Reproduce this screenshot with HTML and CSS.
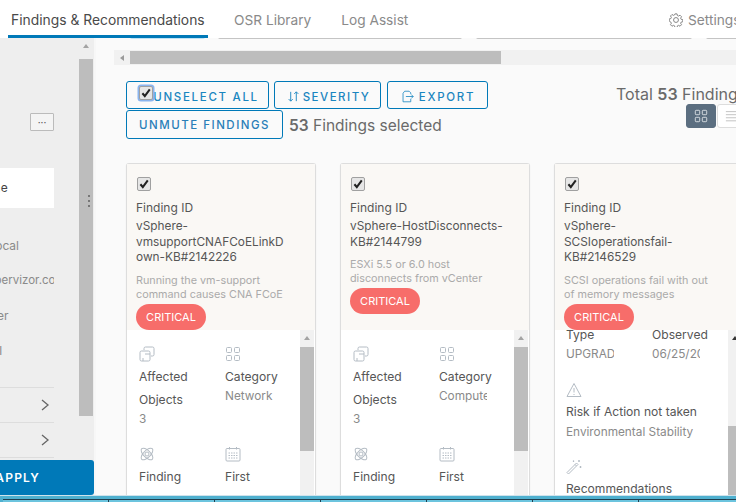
FILE: index.html
```html
<!DOCTYPE html>
<html lang="en">
<head>
<meta charset="utf-8">
<title>Findings &amp; Recommendations</title>
<link rel="stylesheet" href="styles.css">
</head>
<body>
<svg class="defs" width="0" height="0" aria-hidden="true">
  <symbol id="i-clone" viewBox="0 0 16 16"><path d="M5 4V2.500A1.500 1.500 0 0 1 6.500 1h7A1.500 1.500 0 0 1 15 2.500v6a1.500 1.500 0 0 1-1.500 1.500H12M2.500 5h7A1.500 1.500 0 0 1 11 6.500v7A1.500 1.500 0 0 1 9.500 15h-7A1.500 1.500 0 0 1 1 13.500v-7A1.500 1.500 0 0 1 2.500 5ZM6 8h5M4 15v-3"/></symbol>
  <symbol id="i-grid" viewBox="0 0 16 16"><rect x="1.500" y="1.500" width="5" height="5" rx="1"/><rect x="9.500" y="1.500" width="5" height="5" rx="1"/><rect x="1.500" y="9.500" width="5" height="5" rx="1"/><rect x="9.500" y="9.500" width="5" height="5" rx="1"/></symbol>
  <symbol id="i-atom" viewBox="0 0 16 16"><ellipse cx="8" cy="8" rx="7.500" ry="3.500" transform="rotate(45 8 8)"/><ellipse cx="8" cy="8" rx="7.500" ry="3.500" transform="rotate(-45 8 8)"/><circle cx="8" cy="8" r="2"/></symbol>
  <symbol id="i-cal" viewBox="0 0 16 16"><rect x="1" y="2.500" width="14" height="12.500" rx="1"/><path d="M4.500 1v3M11.500 1v3M3.500 7h9M3.500 9.500h9M3.500 12h9" stroke-dasharray="1.500 1"/></symbol>
  <symbol id="i-warn" viewBox="0 0 16 16"><path d="M8 1.500 15 14.500H1ZM8 6v4.500M8 12v1"/></symbol>
  <symbol id="i-wand" viewBox="0 0 16 16"><path d="M1 13.500 10.500 4l1.500 1.500L2.500 15ZM9 5.500 10.500 7M13 1v2M14 2h-2M14.500 7v2M15.500 8h-2M7.500 1.500v1.500M8.200 2.200H6.800"/></symbol>
  <symbol id="i-chev" viewBox="0 0 10 14"><path d="M2 2l6 5-6 5"/></symbol>
  <symbol id="i-tick" viewBox="0 0 14 14"><path d="M2.800 7.300 5.600 10.500 11.400 2.800"/></symbol>
</svg>
<div class="page">
  <nav class="tabs">
    <a class="tab active">Findings &amp; Recommendations</a>
    <a class="tab">OSR Library</a>
    <a class="tab">Log Assist</a>
    <span class="settings">
      <svg class="gear" viewBox="0 0 16 16"><path d="M6.800 1h2.400l.4 1.900 1.300.6 1.700-1 1.700 1.700-1 1.700.6 1.300 1.900.4v2.400l-1.900.4-.6 1.300 1 1.700-1.700 1.700-1.700-1-1.300.6-.4 1.900H6.800l-.4-1.900-1.300-.6-1.700 1-1.700-1.700 1-1.700-.6-1.300L.2 9.200V6.800l1.900-.4.6-1.300-1-1.700 1.700-1.700 1.700 1 1.300-.6Z"/><circle cx="8" cy="8" r="2.800"/></svg>
      Settings
    </span>
  </nav>
  <div class="main">
    <aside class="side">
      <div class="side-col">
        <button class="more">···</button>
        <div class="picked">All Time</div>
        <ul class="hosts">
          <li>vc01.local</li>
          <li>esx.hypervizor.com</li>
          <li>Cluster</li>
          <li>All</li>
        </ul>
        <div class="acc"><svg class="chev"><use href="#i-chev"/></svg></div>
        <div class="acc"><svg class="chev"><use href="#i-chev"/></svg></div>
      </div>
      <div class="vbar"><i class="up"></i><b class="thumb"></b></div>
      <div class="grip"><i></i><i></i><i></i></div>
      <button class="apply">APPLY</button>
    </aside>
    <section class="content">
      <div class="pills"><i class="pill blue"></i><i class="pill p1"></i><i class="pill p2"></i><i class="pill p3"></i></div>
      <div class="hbar"><i class="left"></i><b></b></div>
      <div class="toolbar">
        <div class="actions">
          <button class="btn b-unselect">UNSELECT ALL</button>
          <button class="btn b-sev"><svg class="ico" viewBox="0 0 14 14"><path d="M4 2v10M1.800 9.800 4 12l2.200-2.200M10 12V2M7.800 4.200 10 2l2.200 2.200"/></svg>SEVERITY</button>
          <button class="btn b-exp"><svg class="ico" viewBox="0 0 16 16"><path d="M12 5V3.500L10 1.500H4.500L2.500 4v10.500h9.500V11M6 8h9M12.500 5.500 15 8l-2.500 2.500"/></svg>EXPORT</button>
          <button class="btn b-unmute">UNMUTE FINDINGS</button>
          <span class="selected"><strong>53</strong> Findings selected</span>
          <span class="chk chk-focus" role="checkbox" aria-checked="true"><svg><use href="#i-tick"/></svg></span>
        </div>
        <div class="totals">
          <div class="total">Total <strong>53</strong> Findings</div>
          <div class="views">
            <span class="view on"><svg><use href="#i-grid"/></svg></span>
            <span class="view"><svg viewBox="0 0 16 16"><path d="M1 3h14M1 6.500h14M1 10h14M1 13.500h14"/></svg></span>
          </div>
        </div>
      </div>
      <div class="cards">
        <article class="card">
          <header class="head">
            <span class="chk" role="checkbox" aria-checked="true"><svg><use href="#i-tick"/></svg></span>
            <h4>Finding ID</h4>
            <p class="name">vSphere-<br>vmsupportCNAFCoELinkD<br>own-KB#2142226</p>
            <p class="desc">Running the vm-support<br>command causes CNA FCoE</p>
            <span class="crit">CRITICAL</span>
          </header>
          <div class="body">
            <div class="grid">
              <div class="cell"><svg class="ic"><use href="#i-clone"/></svg><h5>Affected Objects</h5><p>3</p></div>
              <div class="cell"><svg class="ic"><use href="#i-grid"/></svg><h5>Category</h5><p class="cut">Network</p></div>
              <div class="cell"><svg class="ic"><use href="#i-atom"/></svg><h5>Finding</h5></div>
              <div class="cell"><svg class="ic"><use href="#i-cal"/></svg><h5>First</h5></div>
            </div>
            <div class="vbar inner"><i class="up"></i><b class="thumb"></b></div>
          </div>
        </article>
        <article class="card">
          <header class="head">
            <span class="chk" role="checkbox" aria-checked="true"><svg><use href="#i-tick"/></svg></span>
            <h4>Finding ID</h4>
            <p class="name">vSphere-HostDisconnects-<br>KB#2144799</p>
            <p class="desc">ESXi 5.5 or 6.0 host<br>disconnects from vCenter</p>
            <span class="crit">CRITICAL</span>
          </header>
          <div class="body">
            <div class="grid">
              <div class="cell"><svg class="ic"><use href="#i-clone"/></svg><h5>Affected Objects</h5><p>3</p></div>
              <div class="cell"><svg class="ic"><use href="#i-grid"/></svg><h5>Category</h5><p class="cut">Compute</p></div>
              <div class="cell"><svg class="ic"><use href="#i-atom"/></svg><h5>Finding</h5></div>
              <div class="cell"><svg class="ic"><use href="#i-cal"/></svg><h5>First</h5></div>
            </div>
            <div class="vbar inner"><i class="up"></i><b class="thumb"></b></div>
          </div>
        </article>
        <article class="card">
          <header class="head">
            <span class="chk" role="checkbox" aria-checked="true"><svg><use href="#i-tick"/></svg></span>
            <h4>Finding ID</h4>
            <p class="name">vSphere-<br>SCSIoperationsfail-<br>KB#2146529</p>
            <p class="desc">SCSI operations fail with out<br>of memory messages</p>
            <span class="crit">CRITICAL</span>
          </header>
          <div class="body scrolled">
            <div class="grid">
              <div class="cell"><h5>Type</h5><p class="cut">UPGRADE</p></div>
              <div class="cell"><h5>Observed</h5><p class="cut">06/25/2018</p></div>
            </div>
            <div class="wide"><svg class="ic"><use href="#i-warn"/></svg><h5>Risk if Action not taken</h5><p>Environmental Stability</p></div>
            <div class="wide"><svg class="ic"><use href="#i-wand"/></svg><h5>Recommendations</h5></div>
            <div class="vbar inner low"><i class="up"></i><b class="thumb"></b></div>
          </div>
        </article>
      </div>
    </section>
  </div>
  <div class="strip"><i></i><i></i><i></i><i></i><i></i><i></i><i></i></div>
</div>
</body>
</html>
```
FILE: styles.css
```css
* { box-sizing: border-box; }
html, body { margin: 0; padding: 0; }
body { width: 736px; height: 502px; overflow: hidden; background: #fff; font-family: Inter, "Liberation Sans", sans-serif; color: #565656; }
.defs { position: absolute; }
svg { fill: none; stroke: currentColor; stroke-width: 1; }
button { font-family: inherit; }
h4, h5, p, ul { margin: 0; padding: 0; font-weight: 400; }
ul { list-style: none; }

.page { width: 736px; height: 502px; display: flex; flex-direction: column; overflow: hidden; }

.tabs { height: 38px; flex: none; display: flex; align-items: flex-start; padding-left: 8px; font-size: 13.700px; color: #8a8a8a; background: #fff; }
.tab { height: 38px; line-height: 40px; margin-right: 24px; padding: 0 3px; }
.tab.active { color: #4a4a4a; border-bottom: 3px solid #0079b8; width: 200px; margin-right: 23px; white-space: nowrap; font-size: 13.850px; }
.settings { margin-left: auto; display: flex; align-items: center; gap: 5px; height: 40px; margin-right: -23px; width: 90px; white-space: nowrap; flex: none; }
.gear { width: 14px; height: 14px; flex: none; color: #777; }

.main { flex: 1; min-height: 0; display: flex; }

.side { width: 96px; flex: none; position: relative; background: #eee; border-right: 2px solid #f7f7f7; overflow: hidden; display: flex; }
.side-col { width: 54px; flex: none; font-size: 12px; color: #8a8a8a; overflow: hidden; padding-top: 75px; }
.more { display: block; width: 24px; height: 18px; margin-left: 30px; padding: 0; background: #f4f4f4; border: 1px solid #bbb; border-radius: 1px; color: #555; font-size: 10px; line-height: 14px; }
.picked { height: 40px; margin: 37px 0 0 -49px; width: 103px; padding-left: 11px; background: #fff; line-height: 40px; color: #444; white-space: nowrap; }
.hosts { margin-top: 20px; }
.hosts li { height: 35px; line-height: 35px; white-space: nowrap; }
.hosts li:nth-child(1) { margin-left: -37px; }
.hosts li:nth-child(2) { margin-left: -41px; font-size: 11.500px; }
.hosts li:nth-child(3) { margin-left: -32px; }
.hosts li:nth-child(4) { margin-left: -12px; }
.acc { height: 35px; border-top: 1px solid #ddd; display: flex; align-items: center; justify-content: flex-end; padding-right: 4px; color: #666; }
.hosts + .acc { margin-top: 19px; }
.chev { width: 10px; height: 14px; stroke-width: 1.300; }
.acc:last-child { border-bottom: 1px solid #ddd; height: 36px; }

.vbar { width: 14px; background: #f1f1f1; flex: none; position: relative; }
.side > .vbar { margin-left: 25px; background: #eee; }
.up { display: block; width: 0; height: 0; margin: 6px auto 0; border: 3.500px solid transparent; border-top: 0; border-bottom: 4px solid #a3a3a3; }
.thumb { display: block; background: #bdbdbd; }
.side .thumb { height: 357px; margin-top: 11px; }
.grip { position: absolute; left: 88px; top: 157px; width: 3px; display: flex; flex-direction: column; gap: 3px; }
.grip i { display: block; width: 2px; height: 2px; background: #777; }
.apply { position: absolute; left: 0; bottom: 0; width: 94px; height: 35px; border: 0; border-radius: 0 3px 3px 0; background: #0079b8; color: #fff; font-size: 12px; font-weight: 600; letter-spacing: 1.200px; padding: 0 54px 0 0; text-align: right; white-space: nowrap; direction: rtl; }

.content { flex: 1; min-width: 0; background: #fafafa; overflow: hidden; padding-left: 18px; }
.pills { height: 2px; display: flex; margin-left: 16px; margin-top: -1px; }
.pill { display: block; flex: none; height: 2px; border-radius: 0 0 6px 6px; background: #c4c4c4; }
.pill.blue { width: 75px; background: #bfe3f5; }
.pill.p1 { width: 244px; margin-left: 13px; }
.pill.p2 { width: 216px; margin-left: 14px; }
.pill.p3 { width: 40px; margin-left: 14px; }
.hbar { height: 15px; margin-top: 11px; background: #f1f1f1; display: flex; align-items: center; }
.hbar b { display: block; width: 371px; height: 13px; background: #bdbdbd; }
.left { display: block; width: 0; height: 0; margin: 0 6px 0 6px; border: 3.500px solid transparent; border-left: 0; border-right: 4px solid #9a9a9a; margin-right: 6px; }

.toolbar { display: flex; margin-top: 16px; padding-left: 12px; height: 82px; position: relative; }
.actions { width: 370px; flex: none; display: flex; flex-wrap: wrap; align-content: flex-start; align-items: center; column-gap: 5px; position: relative; }
.btn { height: 28px; padding: 3px 0 0; display: inline-flex; align-items: center; justify-content: center; gap: 3px; background: #fff0; border: 1px solid #0079b8; border-radius: 3px; color: #1a86c0; font-size: 11.500px; font-weight: 500; letter-spacing: 1.500px; white-space: nowrap; }
.b-unselect { width: 143px; padding-left: 17px; letter-spacing: 1.700px; }
.b-sev { width: 107px; padding-left: 2px; }
.b-exp { width: 101px; margin-left: 1px; gap: 5px; letter-spacing: 1.700px; padding-left: 1px; }
.b-unmute { width: 157px; height: 29px; margin-top: 1px; padding: 1px 0 0; color: #2a7fb8; }
.selected { margin: 1px 0 0 1px; padding-top: 1px; font-size: 15.500px; color: #6a6a6a; white-space: nowrap; }
.selected strong, .total strong { font-weight: 600; }
.ico { width: 13px; height: 13px; flex: none; }
.chk { display: block; width: 14px; height: 14px; margin-left: 1px; background: #e6e6e6; border: 1px solid #a0a0a0; border-radius: 2px; color: #222; }
.chk svg { display: block; width: 12px; height: 12px; stroke-width: 2.400; }
.chk-focus { position: absolute; left: 13px; top: 5px; margin-left: 0; box-shadow: 0 0 0 1.500px #8ab4ee; }
.totals { flex: 1; min-width: 0; padding-left: 120px; white-space: nowrap; }
.total { font-size: 16px; color: #6a6a6a; line-height: 20px; margin-top: 3px; }
.views { display: flex; gap: 1px; margin-top: 0; margin-left: 70px; }
.view { width: 30px; height: 24px; display: flex; align-items: center; justify-content: center; border-radius: 3px; border: 1px solid #ddd; background: #fff; color: #bbb; flex: none; }
.view svg { width: 14px; height: 14px; }
.view.on { background: #5b6e80; border-color: #5b6e80; color: #e4e8ec; }

.cards { display: flex; gap: 24px; margin-left: 12px; }
.card { width: 190px; height: 345px; flex: none; background: #fff; border: 1px solid #ddd; border-bottom: 0; border-radius: 3px 3px 0 0; display: flex; flex-direction: column; box-shadow: 0 1px 1px #ddd; }
.head { height: 166px; flex: none; background: #faf8f5; padding: 13px 9px 0; position: relative; }
.head h4 { font-size: 12px; line-height: 16px; margin-top: 9px; color: #565656; }
.name { font-size: 11.850px; line-height: 15.500px; margin-top: 3px; color: #565656; white-space: nowrap; }
.desc { font-size: 10.800px; line-height: 14px; margin-top: 8px; color: #aaa; white-space: nowrap; }
.crit { display: block; width: 70px; height: 26px; margin-top: 2px; border-radius: 13px; background: #f76d6a; color: #fff; font-size: 11px; line-height: 26px; text-align: center; }
.body { flex: 1; min-height: 0; display: block; position: relative; padding: 16px 0 0 12px; overflow: hidden; }
.body .vbar.inner { position: absolute; right: 1px; top: 0; bottom: 0; }
.inner .thumb { height: 104px; margin-top: 7px; }
.inner.low .up { border-bottom-color: #333; }
.inner.low .thumb { height: 100px; margin-top: 86px; }
.grid { display: grid; grid-template-columns: 86px 62px; column-gap: 0; }
.cell { padding-bottom: 19px; }
.ic { display: block; width: 16px; height: 16px; color: #b4bcc4; margin-bottom: 3px; }
.cell h5, .wide h5 { font-size: 12.100px; line-height: 23px; color: #565656; }
.cell:nth-child(1) h5 { width: 60px; }
.cell p, .wide p { font-size: 11.800px; line-height: 15px; color: #8a8a8a; margin-top: 1px; }
.cut { width: 48px; overflow: hidden; white-space: nowrap; }
.scrolled { padding: 0 0 0 11px; }
.scrolled .grid { margin-top: -3px; }
.scrolled .cell { padding-bottom: 20px; }
.scrolled h5 { line-height: 16px; }
.scrolled .cell p { margin-top: 4px; }
.wide { padding-bottom: 19px; }
.wide .ic { margin-bottom: 4px; }
.wide h5 { line-height: 20px; white-space: nowrap; }
.wide p { white-space: nowrap; margin-top: 3px; }

.strip { height: 7px; flex: none; display: flex; background: #4fb0cf; border-top: 1px solid #cfe3ec; padding-top: 3px; padding-left: 3px; }
.strip i { display: block; flex: none; width: 106px; height: 3px; background: #6cc4de; border-top: 1px solid #1f3f4f; border-right: 1px solid #1f3f4f; }
```
